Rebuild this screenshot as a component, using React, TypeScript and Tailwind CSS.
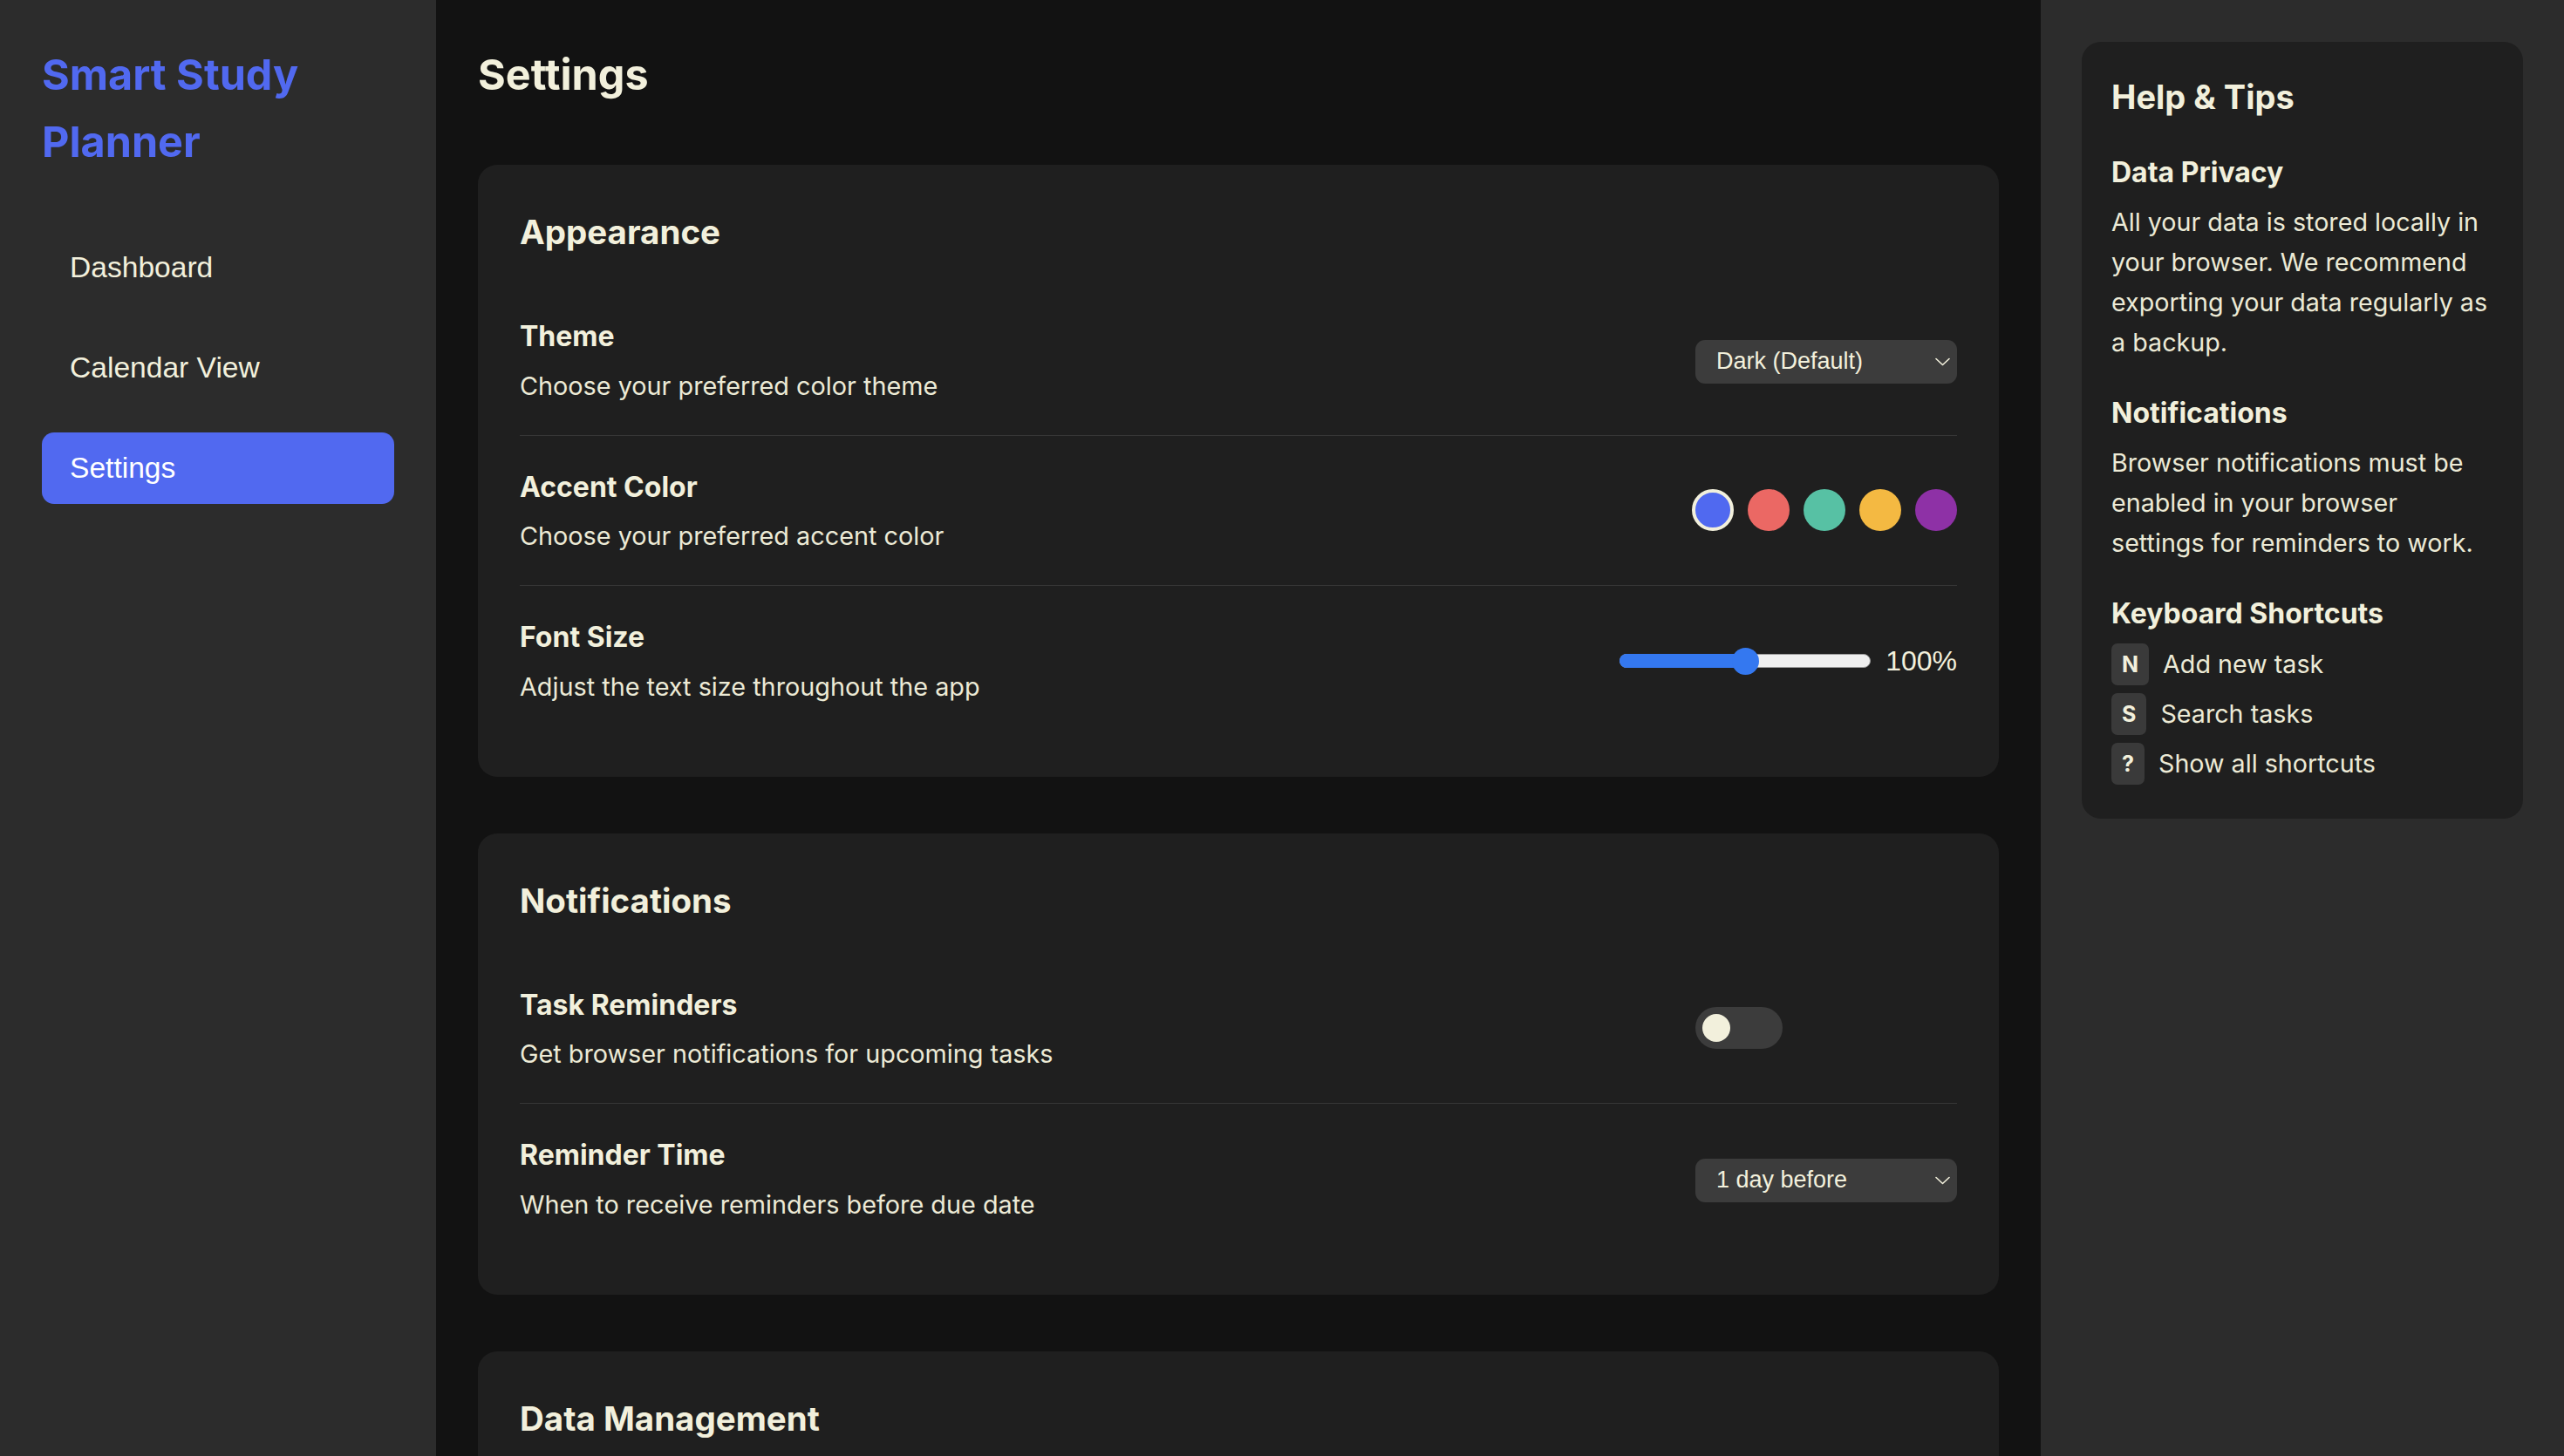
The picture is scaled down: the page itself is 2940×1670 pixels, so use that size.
import React from "react";

function Chevron() {
  return (
    <svg width="17" height="10" viewBox="0 0 17 10" fill="none">
      <path d="M1 1.5 L8.5 8.5 L16 1.5" stroke="#f2f0dc" strokeWidth="1.6" strokeLinecap="round" strokeLinejoin="round" />
    </svg>
  );
}

function Select({ value }: { value: string }) {
  return (
    <div className="mt-[4px] flex h-[50px] w-[300px] items-center justify-between rounded-[11px] bg-[#3c3c3c] pl-[24px] pr-[8px] font-['Liberation_Sans',Arial,sans-serif] text-[27px] leading-none text-[#f2f0dc]">
      <span>{value}</span>
      <Chevron />
    </div>
  );
}

function Row({
  label,
  desc,
  control,
  last,
}: {
  label: string;
  desc: string;
  control: React.ReactNode;
  last?: boolean;
}) {
  return (
    <div
      className={
        "flex items-center justify-between py-[33px] " +
        (last ? "" : "border-b border-[#363636]")
      }
    >
      <div className="flex flex-col">
        <div className="text-[32px] font-bold leading-[51px]">{label}</div>
        <div className="mt-[8.5px] text-[28.8px] leading-[46px] text-[#ecead6]">{desc}</div>
      </div>
      {control}
    </div>
  );
}

function Card({ title, children }: { title: string; children?: React.ReactNode }) {
  return (
    <section className="mb-[65px] rounded-[22px] bg-[#1f1f1f] px-[48px] pb-[47px] pt-[46px]">
      <h2 className={"text-[38.5px] font-bold leading-[62px] " + (children ? "mb-[30px]" : "")}>{title}</h2>
      {children}
    </section>
  );
}

const swatches = ["#5069f0", "#eb6864", "#57c1a4", "#f4b942", "#8e31a6"];

export default function App() {
  return (
    <div className="flex h-[1670px] w-full overflow-hidden bg-[#121212] font-['Inter',sans-serif] leading-[1.6] text-[#f2f0dc]">
      <aside className="w-[500px] shrink-0 bg-[#2c2c2c] px-[48px] pt-[47px]">
        <div className="text-[48.5px] font-bold leading-[77px] text-[#5169f0]">Smart Study Planner</div>
        <nav className="mt-[65px] flex flex-col gap-[33px] font-['Liberation_Sans',Arial,sans-serif] text-[33.6px]">
          <div className="flex h-[82px] items-center rounded-[14px] pl-[32px]">Dashboard</div>
          <div className="flex h-[82px] items-center rounded-[14px] pl-[32px]">Calendar View</div>
          <div className="flex h-[82px] items-center rounded-[14px] bg-[#5169f0] pl-[32px] text-white">Settings</div>
        </nav>
      </aside>

      <main className="min-w-0 flex-1 overflow-hidden px-[48px] pt-[47px]">
        <h1 className="mb-[64px] text-[48.5px] font-bold leading-[78px]">Settings</h1>

        <Card title="Appearance">
          <Row label="Theme" desc="Choose your preferred color theme" control={<Select value="Dark (Default)" />} />
          <Row
            label="Accent Color"
            desc="Choose your preferred accent color"
            control={
              <div className="flex gap-[16px]">
                {swatches.map((c, i) => (
                  <div
                    key={c}
                    className={
                      "h-[48px] w-[48px] rounded-full " + (i === 0 ? "border-[4px] border-[#f2f0dc]" : "")
                    }
                    style={{ backgroundColor: c }}
                  />
                ))}
              </div>
            }
          />
          <Row
            last
            label="Font Size"
            desc="Adjust the text size throughout the app"
            control={
              <div className="flex items-center gap-[17px]">
                <div className="relative h-[16px] w-[288px] rounded-full border border-[#9a9a9a] bg-[#efefef]">
                  <div className="absolute left-[-1px] top-[-1px] h-[16px] w-[150px] rounded-full bg-[#3478f0]" />
                  <div className="absolute left-[128px] top-[-8px] h-[31px] w-[31px] rounded-full bg-[#3478f0]" />
                </div>
                <span className="font-['Liberation_Sans',Arial,sans-serif] text-[32px] leading-none">100%</span>
              </div>
            }
          />
        </Card>

        <Card title="Notifications">
          <Row
            label="Task Reminders"
            desc="Get browser notifications for upcoming tasks"
            control={
              <div className="w-[300px]">
                <div className="flex h-[48px] w-[100px] items-center rounded-full bg-[#3c3c3c] px-[8px]">
                  <div className="h-[32px] w-[32px] rounded-full bg-[#f2f0dc]" />
                </div>
              </div>
            }
          />
          <Row last label="Reminder Time" desc="When to receive reminders before due date" control={<Select value="1 day before" />} />
        </Card>

        <Card title="Data Management" />
      </main>

      <aside className="w-[600px] shrink-0 bg-[#2c2c2c] px-[47px] pt-[48px]">
        <div className="rounded-[22px] bg-[#1f1f1f] px-[34px] pb-[39px] pt-[33px]">
          <h3 className="mb-[30px] text-[38px] font-bold leading-[61px]">Help &amp; Tips</h3>

          <div className="mb-[32px]">
            <h4 className="mb-[9px] text-[32px] font-bold leading-[51px]">Data Privacy</h4>
            <p className="text-[28.7px] leading-[46px] text-[#ecead6]">
              All your data is stored locally in your browser. We recommend exporting your data regularly as a backup.
            </p>
          </div>

          <div className="mb-[32px]">
            <h4 className="mb-[9px] text-[32px] font-bold leading-[51px]">Notifications</h4>
            <p className="text-[28.7px] leading-[46px] text-[#ecead6]">
              Browser notifications must be enabled in your browser settings for reminders to work.
            </p>
          </div>

          <div>
            <h4 className="mb-[9px] text-[32px] font-bold leading-[51px]">Keyboard Shortcuts</h4>
            <div className="flex flex-col gap-[9px]">
              {[
                ["N", "Add new task"],
                ["S", "Search tasks"],
                ["?", "Show all shortcuts"],
              ].map(([k, t]) => (
                <div key={k} className="flex items-center gap-[16px]">
                  <span className="flex h-[48px] items-center rounded-[7px] bg-[#3a3a3a] px-[12px] text-[25px] font-bold leading-none">
                    {k}
                  </span>
                  <span className="text-[28.7px] leading-[46px] text-[#ecead6]">{t}</span>
                </div>
              ))}
            </div>
          </div>
        </div>
      </aside>
    </div>
  );
}
